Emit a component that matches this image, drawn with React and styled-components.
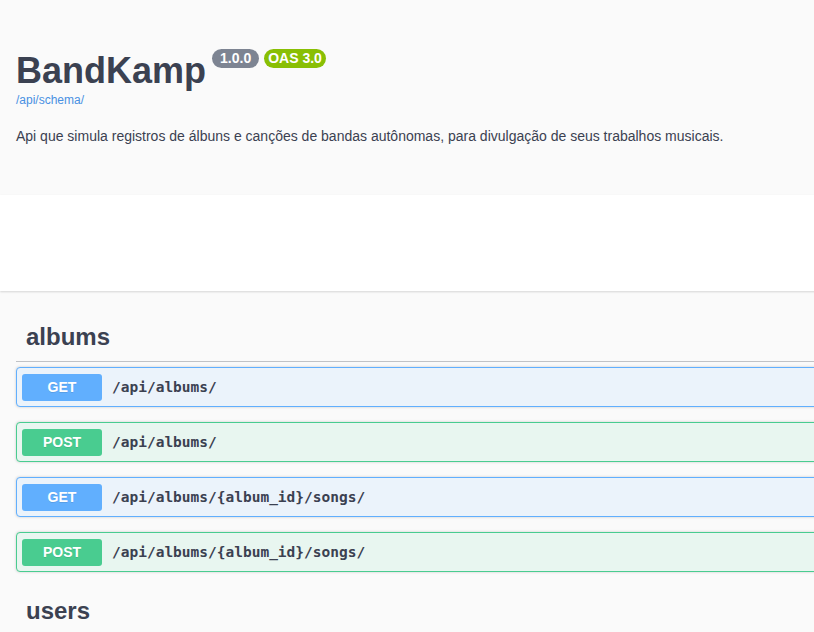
import React from "react"
import styled, { createGlobalStyle } from "styled-components"

const GlobalStyle = createGlobalStyle`
  html, body {
    margin: 0;
    padding: 0;
    background: #fafafa;
    overflow-x: hidden;
  }
  body {
    font-family: "Liberation Sans", Arial, sans-serif;
    color: #3b4151;
  }
`

const methods = {
  GET: { color: "#61affe", bg: "#ebf3fb" },
  POST: { color: "#49cc90", bg: "#e8f6f0" },
}

const sections = [
  {
    tag: "albums",
    ops: [
      { method: "GET", path: "/api/albums/" },
      { method: "POST", path: "/api/albums/" },
      { method: "GET", path: "/api/albums/{album_id}/songs/" },
      { method: "POST", path: "/api/albums/{album_id}/songs/" },
    ],
  },
  { tag: "users", ops: [] },
]

const App = () => {
  return (
    <Page>
      <GlobalStyle />
      <Info>
        <TitleRow>
          <Title>BandKamp</Title>
          <Badge $bg="#7d8492" $pad="8px">1.0.0</Badge>
          <Badge $bg="#89bf04" $pad="4px">OAS 3.0</Badge>
        </TitleRow>
        <SchemaLink href="#">/api/schema/</SchemaLink>
        <Description>
          Api que simula registros de álbuns e canções de bandas autônomas, para divulgação de seus trabalhos musicais.
        </Description>
      </Info>
      <SchemeBar />
      <Operations>
        {sections.map((section) => (
          <Section key={section.tag}>
            <TagHeading>{section.tag}</TagHeading>
            {section.ops.map((op, i) => (
              <OpBlock key={i} $method={op.method}>
                <MethodButton $method={op.method}>{op.method}</MethodButton>
                <Path>{op.path}</Path>
              </OpBlock>
            ))}
          </Section>
        ))}
      </Operations>
    </Page>
  )
}

export default App

const Page = styled.div`
  width: 1100px;
`
const Info = styled.div`
  background: #fafafa;
  padding: 50px 16px 51px;
`
const TitleRow = styled.div`
  display: flex;
  align-items: flex-start;
`
const Title = styled.h2`
  margin: 0;
  font-size: 36px;
  line-height: 42px;
  font-weight: 700;
  color: #3b4151;
`
const Badge = styled.span`
  margin: -1px 0 0 5px;
  height: 19px;
  line-height: 19px;
  padding: 0 ${({ $pad }) => $pad};
  border-radius: 57px;
  background: ${({ $bg }) => $bg};
  color: #fff;
  font-size: 14px;
  font-weight: 700;
  &:first-of-type {
    margin-left: 6px;
  }
`
const SchemaLink = styled.a`
  display: block;
  margin-top: 1px;
  font-size: 12px;
  line-height: 14px;
  color: #4990e2;
  text-decoration: none;
`
const Description = styled.p`
  margin: 21px 0 0;
  font-size: 14px;
  line-height: 16px;
  color: #3b4151;
`
const SchemeBar = styled.div`
  height: 96px;
  background: #fff;
  box-shadow: 0 1px 2px 0 rgba(0, 0, 0, 0.15);
`
const Operations = styled.div`
  padding: 22px 16px 0;
`
const Section = styled.div`
  display: flex;
  flex-direction: column;
`
const TagHeading = styled.h3`
  margin: 0 0 5px;
  padding: 10px 20px 10px 10px;
  font-size: 24px;
  line-height: 28px;
  font-weight: 700;
  color: #3b4151;
  border-bottom: 1px solid rgba(59, 65, 81, 0.3);
`
const OpBlock = styled.div`
  display: flex;
  align-items: center;
  height: 38px;
  padding: 0 5px;
  margin-bottom: 15px;
  border: 1px solid ${({ $method }) => methods[$method].color};
  background: ${({ $method }) => methods[$method].bg};
  border-radius: 4px;
  box-shadow: 0 0 3px rgba(0, 0, 0, 0.19);
`
const MethodButton = styled.span`
  width: 80px;
  height: 27px;
  line-height: 27px;
  text-align: center;
  border-radius: 3px;
  background: ${({ $method }) => methods[$method].color};
  color: #fff;
  font-size: 14px;
  font-weight: 700;
  text-shadow: 0 1px 0 rgba(0, 0, 0, 0.1);
`
const Path = styled.span`
  margin-left: 10px;
  font-family: "DejaVu Sans Mono", "Liberation Mono", monospace;
  font-size: 14.5px;
  font-weight: 700;
  color: #3b4151;
`
